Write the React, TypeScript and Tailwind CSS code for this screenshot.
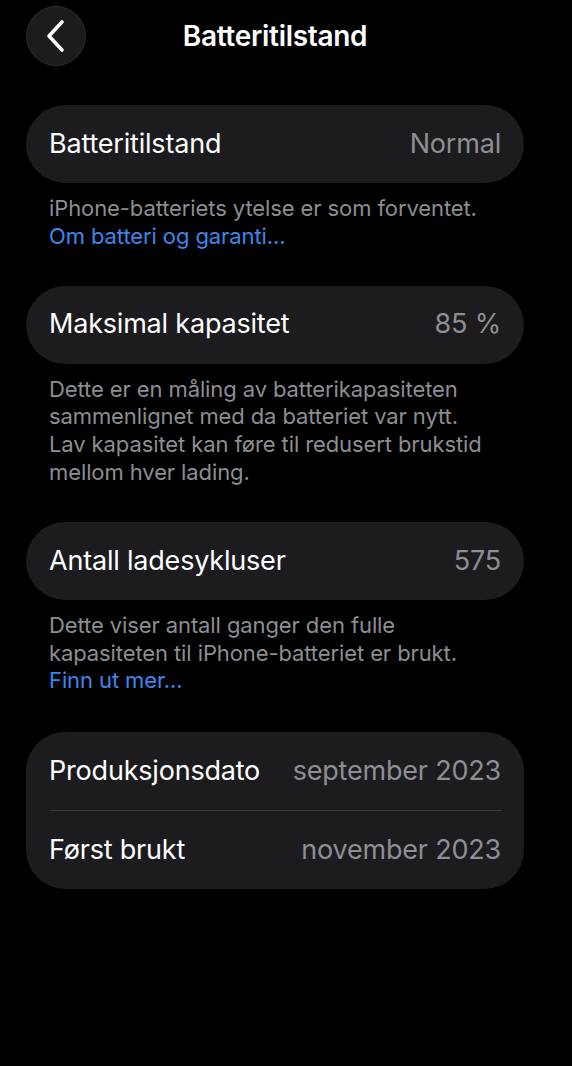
import React from "react";

const font = { fontFamily: "Inter, 'Noto Sans', sans-serif" };

function Row({ label, value }: { label: string; value: string }) {
  return (
    <div className="flex h-[78px] items-center justify-between px-[23px]">
      <span className="text-[27px] tracking-[-0.2px] text-white">{label}</span>
      <span className="text-[27px] tracking-[-0.2px] text-[#8e8e93]">{value}</span>
    </div>
  );
}

function Card({ children }: { children: React.ReactNode }) {
  return <div className="ml-[26px] w-[498px] rounded-[39px] bg-[#1c1c1e]">{children}</div>;
}

function Footer({ children }: { children: React.ReactNode }) {
  return (
    <p className="ml-[49px] mt-[12px] w-[452px] text-[22px] leading-[27.8px] tracking-[-0.1px] text-[#8d8d92]">
      {children}
    </p>
  );
}

export default function App() {
  return (
    <div className="min-h-[1066px] w-[572px] bg-black" style={font}>
      {/* Nav bar */}
      <header className="relative flex h-[72px] w-[550px] items-center justify-center">
        <button
          type="button"
          className="absolute left-[26px] top-[6px] flex h-[60px] w-[60px] items-center justify-center rounded-full border border-[#2c2c2e] bg-[#1c1c1e]"
        >
          <svg width="22" height="34" viewBox="0 0 22 34" fill="none">
            <path d="M17 3 L4 17 L17 31" stroke="white" strokeWidth="3.6" strokeLinecap="round" strokeLinejoin="round" />
          </svg>
        </button>
        <h1 className="text-[28px] font-semibold tracking-[-0.3px] text-white">Batteritilstand</h1>
      </header>

      <div className="pt-[33px]">
        <Card>
          <Row label="Batteritilstand" value="Normal" />
        </Card>
        <Footer>
          iPhone-batteriets ytelse er som forventet.
          <br />
          <span className="text-[#3c88ea]">Om batteri og garanti...</span>
        </Footer>

        <div className="mt-[35px]">
          <Card>
            <Row label="Maksimal kapasitet" value="85 %" />
          </Card>
        </div>
        <Footer>
          Dette er en måling av batterikapasiteten
          <br />
          sammenlignet med da batteriet var nytt.
          <br />
          Lav kapasitet kan føre til redusert brukstid
          <br />
          mellom hver lading.
        </Footer>

        <div className="mt-[35px]">
          <Card>
            <Row label="Antall ladesykluser" value="575" />
          </Card>
        </div>
        <Footer>
          Dette viser antall ganger den fulle
          <br />
          kapasiteten til iPhone-batteriet er brukt.
          <br />
          <span className="text-[#3c88ea]">Finn ut mer...</span>
        </Footer>

        <div className="mt-[37px]">
          <Card>
            <Row label="Produksjonsdato" value="september 2023" />
            <div className="ml-[23px] mr-[22px] h-px bg-[#38383a]" />
            <Row label="Først brukt" value="november 2023" />
          </Card>
        </div>
      </div>
    </div>
  );
}
